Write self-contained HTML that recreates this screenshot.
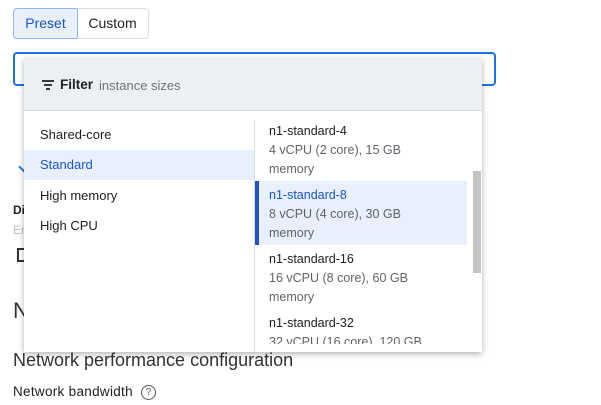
<!DOCTYPE html>
<html><head><style>
*{margin:0;padding:0;box-sizing:border-box}
body{width:601px;height:405px;background:#fff;font-family:"Liberation Sans",sans-serif;position:relative;overflow:hidden;color:#202124}
.abs{position:absolute}
.btn{position:absolute;top:8px;height:31px;font-size:14px;line-height:29px;text-align:center;border:1px solid #dadce0}
.t{position:absolute;white-space:nowrap}
</style></head><body>
<div class="btn" style="left:13px;width:65px;background:#e8f0fe;border-color:#8ab4f8;color:#1a56c8;border-radius:4px 0 0 4px">Preset</div>
<div class="btn" style="left:77px;width:72px;border-left:none;border-radius:0 4px 4px 0">Custom</div>
<div class="abs" style="left:13px;top:52px;width:483px;height:34px;border:2px solid #1a73e8;border-radius:4px"></div>
<div class="abs" style="left:20px;top:163px;width:8px;height:8px;border-left:2px solid #1a73e8;transform:rotate(-45deg)"></div>
<div class="t" style="left:13px;top:203px;font-size:12px;font-weight:bold">Di</div>
<div class="t" style="left:13px;top:223px;font-size:12px;color:#bbb">En</div>
<div class="abs" style="left:17px;top:248px;width:10px;height:14px;border:2px solid #333"></div>
<div class="t" style="left:13px;top:298px;font-size:22px;color:#333">N</div>
<div class="t" style="left:13px;top:350px;font-size:18px;color:#333">Network performance configuration</div>
<div class="t" style="left:13px;top:384px;font-size:13.5px;color:#202124;letter-spacing:0.3px">Network bandwidth</div>
<div class="abs" style="left:141px;top:385px;width:15px;height:15px;border:1.3px solid #555;border-radius:50%;font-size:10px;line-height:13px;text-align:center;color:#555">?</div>

<div class="abs" style="left:24px;top:58px;width:458px;height:294px;background:#fff;box-shadow:0 2px 6px rgba(0,0,0,.3);overflow:hidden">
 <div class="abs" style="left:0;top:0;width:458px;height:53px;background:#eceff3;border-bottom:1px solid #dadce0"></div>
 <svg class="abs" style="left:17px;top:21px" width="14" height="12" viewBox="0 0 14 12"><path d="M1 2h12M3 6h8M5 10h4" stroke="#202124" stroke-width="1.8"/></svg>
 <div class="t" style="left:36px;top:19px;font-size:13.5px;font-weight:bold">Filter</div>
 <div class="t" style="left:75px;top:20px;font-size:13px;color:#70757a">instance sizes</div>
 <div class="abs" style="left:230px;top:62px;width:1px;height:232px;background:#dadce0"></div>
 <div class="abs" style="left:0;top:92px;width:230px;height:30px;background:#e8f0fe"></div>
 <div class="t" style="left:16px;top:69px;font-size:13px">Shared-core</div>
 <div class="t" style="left:16px;top:99px;font-size:13px;color:#1a56c8">Standard</div>
 <div class="t" style="left:16px;top:130px;font-size:13px">High memory</div>
 <div class="t" style="left:16px;top:160px;font-size:13px">High CPU</div>
 <div class="abs" style="left:231px;top:123px;width:212px;height:64px;background:#e8f0fe;border-left:4px solid #1a56c8"></div>
 <div class="abs" style="left:449px;top:113px;width:8px;height:102px;background:#c4c4c4"></div>
 <div class="t" style="left:245px;top:64px;font-size:12.5px;line-height:19px">n1-standard-4<br><span style="color:#5f6368">4 vCPU (2 core), 15 GB<br>memory</span></div>
 <div class="t" style="left:245px;top:128px;font-size:12.5px;line-height:19px"><span style="color:#1a56c8">n1-standard-8</span><br><span style="color:#5f6368">8 vCPU (4 core), 30 GB<br>memory</span></div>
 <div class="t" style="left:245px;top:192px;font-size:12.5px;line-height:19px">n1-standard-16<br><span style="color:#5f6368">16 vCPU (8 core), 60 GB<br>memory</span></div>
 <div class="t" style="left:245px;top:256px;font-size:12.5px;line-height:19px">n1-standard-32<br><span style="color:#5f6368">32 vCPU (16 core), 120 GB</span></div>
 <div class="abs" style="left:231px;top:286px;width:227px;height:8px;background:#fff"></div>
</div>
</body></html>
